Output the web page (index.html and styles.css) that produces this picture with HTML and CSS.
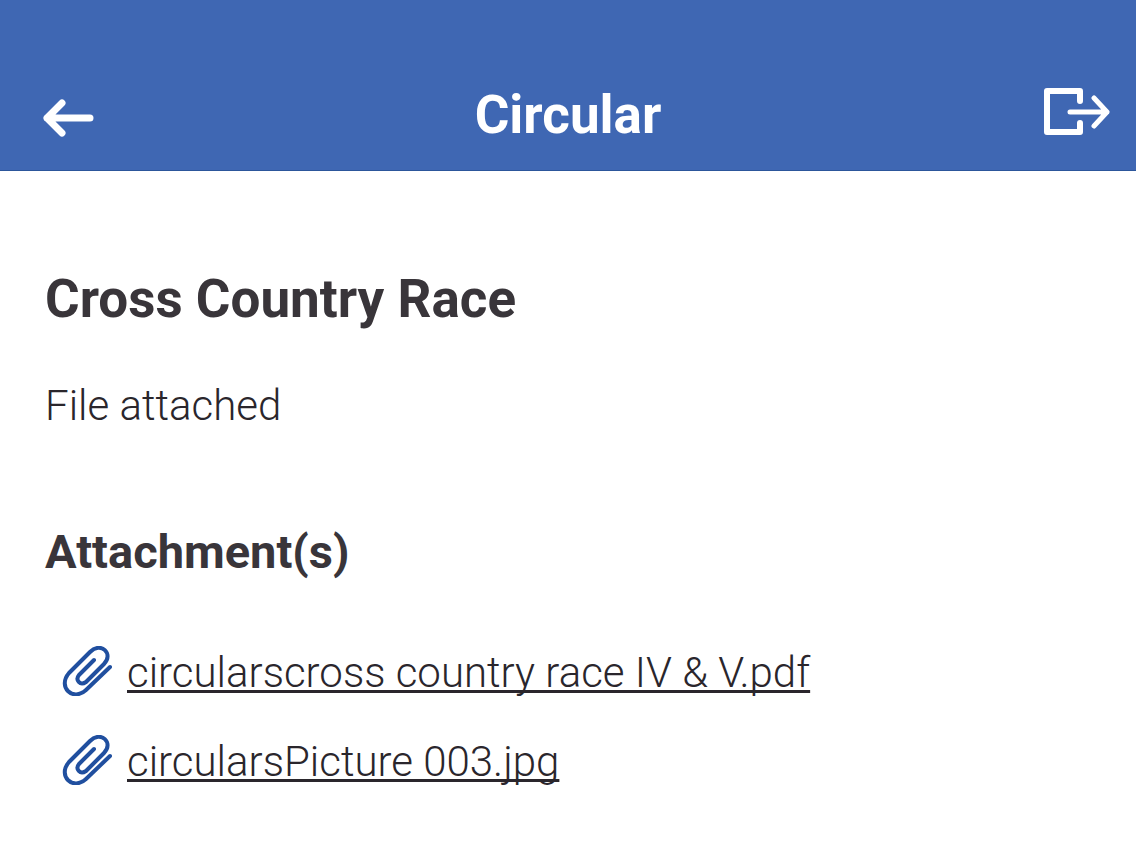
FILE: index.html
```html
<!DOCTYPE html>
<html lang="en">
<head>
<meta charset="utf-8">
<meta name="viewport" content="width=device-width, initial-scale=1">
<title>Circular</title>
<link rel="stylesheet" href="styles.css">
</head>
<body>
<header class="app-bar">
  <button class="icon-button back" type="button" aria-label="Back">
    <svg width="52" height="40" viewBox="0 0 52 40" fill="none" stroke="currentColor" stroke-width="7" stroke-linecap="round" stroke-linejoin="round"><path d="M48 20H5M20 5L5 20L20 35"/></svg>
  </button>
  <h1 class="app-title">Circular</h1>
  <button class="icon-button exit" type="button" aria-label="Exit">
    <svg width="68" height="50" viewBox="0 0 68 50" fill="none" stroke="currentColor" stroke-width="6" stroke-linecap="round" stroke-linejoin="round"><path d="M38 14V4H5V45H38V36"/><path d="M28 25H65M52 11L65 25L52 39" stroke-width="5"/></svg>
  </button>
</header>
<main class="content">
  <h2 class="heading">Cross Country Race</h2>
  <p class="message">File attached</p>
  <h3 class="subheading">Attachment(s)</h3>
  <ul class="attachments">
    <li class="attachment">
      <svg class="clip" viewBox="0 0 50 50" aria-hidden="true"><path d="M32 14L17 29C13 34 18 40 24 36L42 18C52 8 39 -5 28 6L7 27C-5 41 11 56 24 44L48 21"/></svg>
      <a class="file-link" href="#pdf">circularscross country race IV &amp; V.pdf</a>
    </li>
    <li class="attachment">
      <svg class="clip" viewBox="0 0 50 50" aria-hidden="true"><path d="M32 14L17 29C13 34 18 40 24 36L42 18C52 8 39 -5 28 6L7 27C-5 41 11 56 24 44L48 21"/></svg>
      <a class="file-link" href="#jpg">circularsPicture 003.jpg</a>
    </li>
  </ul>
</main>
</body>
</html>
```
FILE: styles.css
```css
* {
  box-sizing: border-box;
}

body {
  margin: 0;
  background: #fff;
  color: #2a262c;
  font-family: Roboto, "Liberation Sans", sans-serif;
}

h1, h2, h3, p, ul {
  margin: 0;
  padding: 0;
}

.app-bar {
  display: grid;
  grid-template-columns: 1fr auto 1fr;
  align-items: center;
  padding: 85px 26px 25px 42px;
  border-bottom: 1px solid #2c569b;
  background: #3f67b3;
  color: #fff;
}

.app-title {
  margin-right: 16px;
  font-size: 53px;
  font-weight: 700;
  line-height: 60px;
}

.icon-button {
  padding: 0;
  border: 0;
  background: none;
  color: inherit;
  cursor: pointer;
}

.icon-button svg {
  display: block;
}

.back {
  justify-self: start;
  margin-top: 6px;
}

.exit {
  justify-self: end;
  margin-bottom: 6px;
}

.content {
  padding: 98px 45px 48px;
}

.heading {
  color: #39353a;
  font-size: 53px;
  font-weight: 700;
  line-height: 60px;
}

.message {
  margin-top: 52px;
  font-size: 42px;
  font-weight: 300;
  line-height: 50px;
}

.subheading {
  margin-top: 94px;
  color: #39353a;
  font-size: 47px;
  font-weight: 700;
  line-height: 54px;
}

.attachments {
  display: grid;
  gap: 39px;
  margin-top: 69px;
  padding-left: 17px;
  list-style: none;
}

.attachment {
  display: flex;
  align-items: center;
  gap: 15px;
}

.clip {
  flex: none;
  width: 50px;
  height: 50px;
  margin-top: -4px;
  fill: none;
  stroke: #204f9f;
  stroke-width: 4;
  stroke-linecap: round;
  stroke-linejoin: round;
}

.file-link {
  color: inherit;
  font-size: 42px;
  font-weight: 300;
  line-height: 50px;
  text-decoration: underline;
  text-decoration-thickness: 3px;
  text-decoration-skip-ink: none;
  text-underline-offset: 3px;
}
```
